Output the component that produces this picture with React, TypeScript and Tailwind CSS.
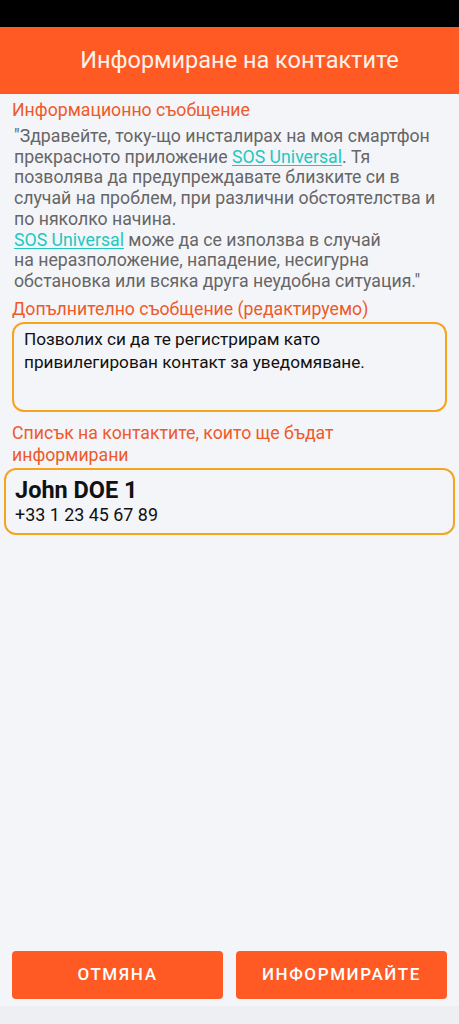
import { Fragment } from 'react';

const font = { fontFamily: 'Roboto, "Noto Sans", sans-serif' };

function Link({ children }: { children: string }) {
  return <span className="text-[#1ec8c0] underline underline-offset-2">{children}</span>;
}

export default function App() {
  return (
    <div className="w-[459px] h-[1024px] flex flex-col bg-[#f4f5f9]" style={font}>
      <div className="h-[27px] bg-black" />
      <div className="h-[67px] bg-[#ff5a23] flex items-center justify-center pl-[20px]">
        <h1 className="text-[23.5px] text-[#fdf2ea]">Информиране на контактите</h1>
      </div>

      <div className="flex-1 flex flex-col px-3 pt-[6px]">
        <h2 className="text-[17.7px] leading-[21px] text-[#ee5a2a]">Информационно съобщение</h2>
        <div className="mt-[5px] pl-[2px] text-[17.7px] leading-[20.7px] text-[#666666] whitespace-nowrap">
          <div>"Здравейте, току-що инсталирах на моя смартфон</div>
          <div>
            прекрасното приложение <Link>SOS Universal</Link>. Тя
          </div>
          <div>позволява да предупреждавате близките си в</div>
          <div>случай на проблем, при различни обстоятелства и</div>
          <div>по няколко начина.</div>
          <div>
            <Link>SOS Universal</Link> може да се използва в случай
          </div>
          <div>на неразположение, нападение, несигурна</div>
          <div>обстановка или всяка друга неудобна ситуация."</div>
        </div>

        <h2 className="mt-[7px] text-[17.7px] leading-[21px] text-[#ee5a2a]">Допълнително съобщение (редактируемо)</h2>
        <div className="mt-[2px] h-[90px] rounded-[12px] border-2 border-[#f7a41d] px-[10px] pt-[4px] text-[17.2px] leading-[23px] text-[#111111]">
          Позволих си да те регистрирам като привилегирован контакт за уведомяване.
        </div>

        <h2 className="mt-[10px] text-[17.7px] leading-[22px] text-[#ee5a2a] pr-10">
          Списък на контактите, които ще бъдат информирани
        </h2>
        <div className="mt-[2px] -mx-2 h-[67px] rounded-[12px] border-2 border-[#f7a41d] px-[9px] pt-[6px]">
          <div className="text-[23.5px] leading-[28px] font-bold text-[#111111]">John DOE 1</div>
          <div className="text-[17.9px] leading-[22px] text-[#111111]">+33 1 23 45 67 89</div>
        </div>

        <div className="flex-1" />

        <div className="flex gap-[13px] mb-[7px]">
          {['ОТМЯНА', 'ИНФОРМИРАЙТЕ'].map((label) => (
            <Fragment key={label}>
              <button className="flex-1 h-[48px] rounded-[4px] bg-[#ff5a23] text-white text-[17px] font-medium tracking-[1.6px]">
                {label}
              </button>
            </Fragment>
          ))}
        </div>
      </div>
      <div className="h-[18px] bg-[#eeeff3]" />
    </div>
  );
}
